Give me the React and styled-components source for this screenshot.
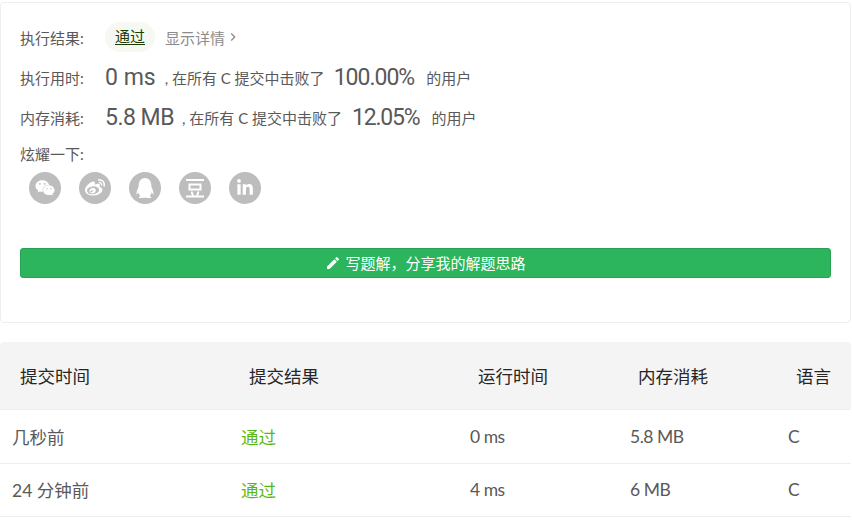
import React from 'react';
import styled, { createGlobalStyle } from 'styled-components';
import { FaWeixin, FaWeibo, FaLinkedinIn } from 'react-icons/fa';
import { RiQqFill } from 'react-icons/ri';
import { MdEdit, MdChevronRight } from 'react-icons/md';

const GlobalStyle = createGlobalStyle`
html, body { margin: 0; padding: 0; background: #fff; }
body {
  width: 852px;
  height: 520px;
  overflow: hidden;
  font-family: Lato, "Noto Sans CJK SC", sans-serif;
  color: #595959;
}
* { box-sizing: border-box; }
`;

const Page = styled.div`
  width: 851px;
  padding-top: 2px;
`;

const ResultCard = styled.section`
  height: 321px;
  border: 1px solid #eeeeee;
  border-radius: 4px;
  padding: 14px 19px 0;
`;

const InfoRow = styled.div`
  display: flex;
  align-items: center;
  height: 40px;
  font-size: 15px;
  color: #595959;
`;

const Label = styled.span`
  width: 85px;
  flex: none;
`;

const StatusPill = styled.span`
  width: 50px;
  height: 30px;
  border-radius: 15px;
  background: #f6f9f2;
  color: #1a3a06;
  text-align: center;
  line-height: 29px;
  text-decoration: underline;
  text-underline-offset: 2px;
`;

const DetailLink = styled.span`
  display: flex;
  align-items: center;
  margin-left: 10px;
  color: #8c8c8c;
`;

const BigNumber = styled.span`
  font-family: Roboto, sans-serif;
  font-size: 23px;
  font-weight: 400;
  color: #595959;
  letter-spacing: ${({ tight }) => tight}px;
  margin: ${({ margin }) => margin};
`;

const Note = styled.span`
  white-space: pre;
`;

const ShareLabel = styled.div`
  font-size: 15px;
  line-height: 20px;
  margin-top: 7px;
  color: #595959;
`;

const ShareRow = styled.div`
  display: flex;
  gap: 18px;
  padding-left: 9px;
  margin-top: 8px;
`;

const ShareIcon = styled.span`
  display: flex;
  align-items: center;
  justify-content: center;
  width: 32px;
  height: 32px;
  border-radius: 50%;
  background: #bdbdbd;
  color: #fff;
  font-size: ${({ size }) => size}px;
`;

const WriteButton = styled.button`
  display: flex;
  align-items: center;
  justify-content: center;
  gap: 4px;
  width: 100%;
  height: 30px;
  margin-top: 44px;
  border: 1px solid #28a254;
  border-radius: 3px;
  background: #2db55d;
  color: #fff;
  font-family: inherit;
  font-size: 15px;
  padding: 0 0 1px;
`;

const Table = styled.div`
  margin-top: 19px;
`;

const Row = styled.div`
  display: grid;
  grid-template-columns: 229px 229px 160px 158px 75px;
  align-items: center;
  height: ${({ head }) => (head ? 68 : 53.5)}px;
  border-bottom: 1px solid #eeeeee;
  background: ${({ head }) => (head ? '#f4f4f4' : '#fff')};
  border-radius: ${({ head }) => (head ? '4px 4px 0 0' : '0')};
  font-size: 17.5px;
  color: ${({ head }) => (head ? '#262626' : '#595959')};
`;

const Cell = styled.div`
  padding-left: ${({ head }) => (head ? 20 : 12)}px;
  color: ${({ ok }) => (ok ? '#5cb811' : 'inherit')};
  letter-spacing: ${({ latin }) => (latin ? '-0.5px' : '0')};
  white-space: nowrap;
`;

const DoubanIcon = () => (
  <svg width="22" height="22" viewBox="0 0 22 22" fill="none" stroke="currentColor" strokeWidth="2">
    <path d="M2 3h18" />
    <path d="M5.5 7.5h11v5h-11z" />
    <path d="M7.5 14.5l1.5 4.5M14.5 14.5l-1.5 4.5" />
    <path d="M2 19.5h18" />
  </svg>
);

const columns = ['提交时间', '提交结果', '运行时间', '内存消耗', '语言'];
const submissions = [
  ['几秒前', '通过', '0 ms', '5.8 MB', 'C'],
  ['24 分钟前', '通过', '4 ms', '6 MB', 'C'],
];
const shareIcons = [
  { Icon: FaWeixin, size: 20 },
  { Icon: FaWeibo, size: 20 },
  { Icon: RiQqFill, size: 24 },
  { Icon: DoubanIcon, size: 22 },
  { Icon: FaLinkedinIn, size: 18 },
];

const App = () => (
  <Page>
    <GlobalStyle />
    <ResultCard>
      <InfoRow>
        <Label>执行结果:</Label>
        <StatusPill>通过</StatusPill>
        <DetailLink>显示详情<MdChevronRight size={16} /></DetailLink>
      </InfoRow>
      <InfoRow>
        <Label>执行用时:</Label>
        <BigNumber tight={0} margin="0 9px 0 0">0 ms</BigNumber>
        <Note>, 在所有 C 提交中击败了</Note>
        <BigNumber tight={-1} margin="0 12px 0 9px">100.00%</BigNumber>
        <Note>的用户</Note>
      </InfoRow>
      <InfoRow>
        <Label>内存消耗:</Label>
        <BigNumber tight={-0.5} margin="0 8px 0 0">5.8 MB</BigNumber>
        <Note>, 在所有 C 提交中击败了</Note>
        <BigNumber tight={-1.2} margin="0 12px 0 10px">12.05%</BigNumber>
        <Note>的用户</Note>
      </InfoRow>
      <ShareLabel>炫耀一下:</ShareLabel>
      <ShareRow>
        {shareIcons.map(({ Icon, size }, i) => (
          <ShareIcon key={i} size={size}><Icon /></ShareIcon>
        ))}
      </ShareRow>
      <WriteButton><MdEdit size={16} />写题解，分享我的解题思路</WriteButton>
    </ResultCard>
    <Table>
      <Row head>
        {columns.map((c) => <Cell head key={c}>{c}</Cell>)}
      </Row>
      {submissions.map((item, i) => (
        <Row key={i}>
          {item.map((v, j) => <Cell key={j} ok={j === 1} latin={j >= 2}>{v}</Cell>)}
        </Row>
      ))}
    </Table>
  </Page>
);

export default App;
